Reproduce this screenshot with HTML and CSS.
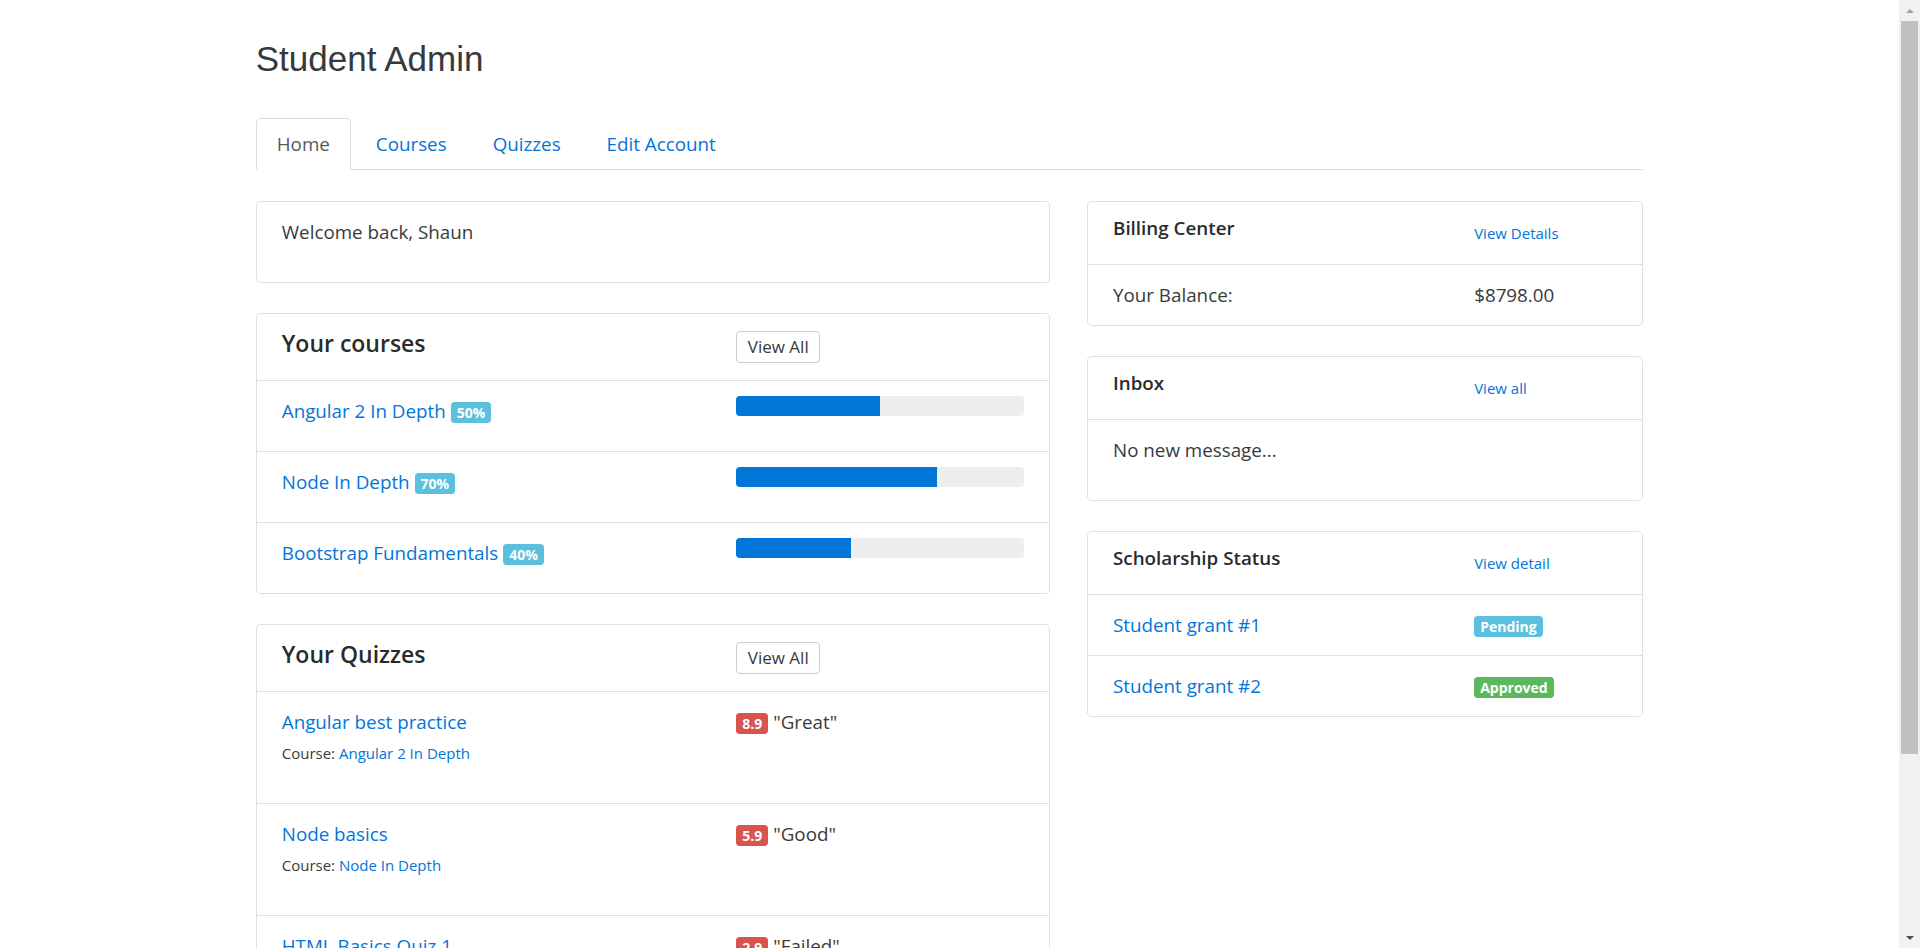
FILE: index.html
```html
<!DOCTYPE html>
<html lang="en">
<head>
<meta charset="utf-8">
<title>Student Admin</title>
<link rel="stylesheet" href="styles.css">
</head>
<body>
<div class="container">
  <h1 class="page-title">Student Admin</h1>

  <ul class="nav-tabs">
    <li class="nav-item"><a class="nav-link active" href="#">Home</a></li>
    <li class="nav-item"><a class="nav-link" href="#">Courses</a></li>
    <li class="nav-item"><a class="nav-link" href="#">Quizzes</a></li>
    <li class="nav-item"><a class="nav-link" href="#">Edit Account</a></li>
  </ul>

  <div class="dashboard">
    <main class="col-main">
      <section class="card">
        <div class="card-block">
          <p class="text">Welcome back, Shaun</p>
        </div>
      </section>

      <section class="card">
        <div class="card-head split">
          <h5 class="title-lg">Your courses</h5>
          <div class="head-action"><button class="btn" type="button">View All</button></div>
        </div>
        <ul class="list">
          <li class="list-item course split">
            <div><a href="#">Angular 2 In Depth</a> <span class="badge badge-info">50%</span></div>
            <div><div class="progress"><div class="progress-bar" style="width:50%"></div></div></div>
          </li>
          <li class="list-item course split">
            <div><a href="#">Node In Depth</a> <span class="badge badge-info">70%</span></div>
            <div><div class="progress"><div class="progress-bar" style="width:70%"></div></div></div>
          </li>
          <li class="list-item course split">
            <div><a href="#">Bootstrap Fundamentals</a> <span class="badge badge-info">40%</span></div>
            <div><div class="progress"><div class="progress-bar" style="width:40%"></div></div></div>
          </li>
        </ul>
      </section>

      <section class="card">
        <div class="card-head split">
          <h5 class="title-lg">Your Quizzes</h5>
          <div class="head-action"><button class="btn" type="button">View All</button></div>
        </div>
        <ul class="list">
          <li class="list-item quiz split">
            <div>
              <div class="quiz-name"><a href="#">Angular best practice</a></div>
              <p class="text"><small>Course: <a href="#">Angular 2 In Depth</a></small></p>
            </div>
            <div><span class="badge badge-danger">8.9</span> "Great"</div>
          </li>
          <li class="list-item quiz split">
            <div>
              <div class="quiz-name"><a href="#">Node basics</a></div>
              <p class="text"><small>Course: <a href="#">Node In Depth</a></small></p>
            </div>
            <div><span class="badge badge-danger">5.9</span> "Good"</div>
          </li>
          <li class="list-item quiz split">
            <div>
              <div class="quiz-name"><a href="#">HTML Basics Quiz 1</a></div>
              <p class="text"><small>Course: <a href="#">Bootstrap Fundamentals</a></small></p>
            </div>
            <div><span class="badge badge-danger">2.9</span> "Failed"</div>
          </li>
        </ul>
      </section>
    </main>

    <aside class="col-side">
      <section class="card">
        <div class="card-head-sm split-wide">
          <h6 class="title-sm">Billing Center</h6>
          <div><a href="#"><small>View Details</small></a></div>
        </div>
        <ul class="list">
          <li class="list-item split-wide">
            <div>Your Balance:</div>
            <div>$8798.00</div>
          </li>
        </ul>
      </section>

      <section class="card">
        <div class="card-head-sm split-wide">
          <h6 class="title-sm">Inbox</h6>
          <div><a href="#"><small>View all</small></a></div>
        </div>
        <div class="card-block">
          <p class="text">No new message...</p>
        </div>
      </section>

      <section class="card">
        <div class="card-head-sm split-wide">
          <h6 class="title-sm">Scholarship Status</h6>
          <div><a href="#"><small>View detail</small></a></div>
        </div>
        <ul class="list">
          <li class="list-item split-wide">
            <div><a href="#">Student grant #1</a></div>
            <div><span class="badge badge-info">Pending</span></div>
          </li>
          <li class="list-item split-wide">
            <div><a href="#">Student grant #2</a></div>
            <div><span class="badge badge-success">Approved</span></div>
          </li>
        </ul>
      </section>
    </aside>
  </div>
</div>

<div class="scrollbar" aria-hidden="true">
  <span class="sb-arrow sb-up"></span>
  <span class="sb-track"><span class="sb-thumb"></span></span>
  <span class="sb-arrow sb-down"></span>
</div>
</body>
</html>
```

FILE: styles.css
```css
* { box-sizing: border-box; }

html { background: #fff; }

body {
  margin: 0;
  padding-right: 21px;
  font-family: "Open Sans", "Noto Sans", sans-serif;
  font-size: 18.8px;
  line-height: 30px;
  color: #373a3c;
  background: #fff;
}

a { color: #0275d8; text-decoration: none; }

small { font-size: 15px; }

.container {
  width: 1387.5px;
  margin: 0 auto;
  padding: 40px 0 104px;
}

.page-title {
  margin: 0 0 40px;
  font-family: "Liberation Sans", Arial, sans-serif;
  font-size: 35px;
  font-weight: 400;
  line-height: 38px;
  color: #373a3c;
}

/* tabs */
.nav-tabs {
  display: flex;
  list-style: none;
  margin: 0;
  padding: 0;
  border-bottom: 1px solid #ddd;
}
.nav-item { margin-bottom: -1px; }
.nav-item + .nav-item { margin-left: 4px; }
.nav-link {
  display: block;
  padding: 10px 20px;
  line-height: 30px;
  border: 1px solid transparent;
  border-radius: 5px 5px 0 0;
}
.nav-link.active {
  color: #55595c;
  background: #fff;
  border-color: #ddd #ddd transparent;
}

/* page grid */
.dashboard {
  display: grid;
  grid-template-columns: calc((100% + 37.5px) * 7 / 12 - 37.5px) 1fr;
  column-gap: 37.5px;
  align-items: start;
  margin-top: 30.5px;
}

.split {
  display: grid;
  grid-template-columns: calc((100% + 37.5px) * 7 / 12 - 37.5px) 1fr;
  column-gap: 37.5px;
}
.split-wide {
  display: grid;
  grid-template-columns: calc((100% + 37.5px) * 8 / 12 - 37.5px) 1fr;
  column-gap: 37.5px;
}

/* cards */
.card {
  background: #fff;
  border: 1px solid rgba(0, 0, 0, 0.125);
  border-radius: 5px;
  margin-bottom: 30px;
}
.card-block { padding: 15px 25px; }
.text { margin: 0 0 20px; }

.card-head {
  padding: 17px 25px 17px;
  border-bottom: 1px solid rgba(0, 0, 0, 0.125);
}
.card-head-sm {
  padding: 15px 25px;
  border-bottom: 1px solid rgba(0, 0, 0, 0.125);
}

.title-lg {
  margin: 0;
  font-size: 23px;
  font-weight: 600;
  line-height: 24px;
  color: #292b2c;
}
.title-sm {
  margin: 0 0 10px;
  font-size: 18.8px;
  font-weight: 600;
  line-height: 22px;
  color: #292b2c;
}

.head-action { display: flex; align-items: flex-start; }

.btn {
  font-family: inherit;
  font-size: 17px;
  line-height: 20px;
  padding: 5px 10.5px;
  color: #373a3c;
  background: #fff;
  border: 1px solid #ccc;
  border-radius: 4px;
  cursor: pointer;
}

/* lists */
.list { list-style: none; margin: 0; padding: 0; }
.list-item { padding: 15px 25px; }
.list-item + .list-item { border-top: 1px solid rgba(0, 0, 0, 0.125); }

.progress {
  height: 20px;
  margin-bottom: 20px;
  background: #eceeef;
  border-radius: 4px;
  overflow: hidden;
}
.progress-bar { height: 100%; background: #0275d8; }

.badge {
  display: inline-block;
  padding: 3.5px 6px;
  font-size: 14px;
  font-weight: 700;
  line-height: 1;
  color: #fff;
  border-radius: 3.75px;
  vertical-align: baseline;
}
.badge-info { background: #5bc0de; }
.badge-success { background: #5cb85c; }
.badge-danger { background: #d9534f; }

/* window scrollbar (classic style) */
.scrollbar {
  position: fixed;
  top: 0;
  right: 0;
  width: 21px;
  height: 100vh;
  display: flex;
  flex-direction: column;
  background: #f1f1f1;
}
.sb-arrow {
  flex: none;
  height: 21px;
  display: flex;
  align-items: center;
  justify-content: center;
}
.sb-arrow::before {
  content: "";
  width: 0;
  height: 0;
  border-left: 4.5px solid transparent;
  border-right: 4.5px solid transparent;
}
.sb-up::before { border-bottom: 4.5px solid #a3a3a3; }
.sb-down::before { border-top: 4.5px solid #505050; }
.sb-track {
  flex: 1;
  display: block;
  padding: 0 2px;
}
.sb-thumb {
  display: block;
  height: 733px;
  background: #c1c1c1;
}
```
